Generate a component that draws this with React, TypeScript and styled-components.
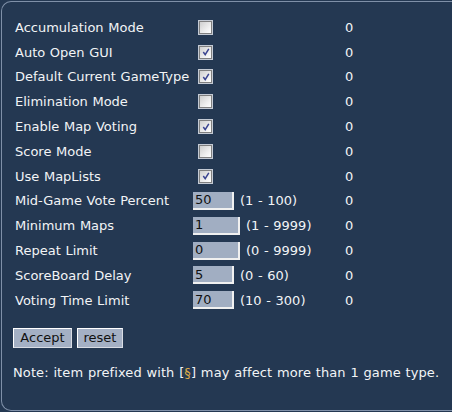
import React from "react";
import styled, { createGlobalStyle } from "styled-components";

const Global = createGlobalStyle`
  html, body { margin: 0; padding: 0; background: #243852; overflow: hidden; }
  body { font-family: "DejaVu Sans", Verdana, sans-serif; }
`;

const Page = styled.div`
  width: 452px;
  height: 412px;
  padding: 1px 0 1px 1px;
  box-sizing: border-box;
  overflow: hidden;
`;

const Panel = styled.div`
  width: 470px;
  height: 410px;
  box-sizing: border-box;
  border: 1px solid #7f90a8;
  border-right: none;
  border-radius: 10px 0 0 10px;
  background: #243852;
  padding: 13px 0 0 13px;
  color: #f2f4f6;
  font-size: 13px;
  word-spacing: 0.5px;
`;

const Grid = styled.div`
  display: grid;
  grid-template-columns: 178px 152px auto;
  grid-auto-rows: 24.8px;
  align-items: center;
`;

const Label = styled.div`
  white-space: nowrap;
`;

const Cell = styled.div`
  display: flex;
  align-items: center;
  gap: 6px;
`;

const Value = styled.div``;

const Box = styled.span<{ $checked?: boolean }>`
  display: inline-flex;
  align-items: center;
  justify-content: center;
  width: 11px;
  height: 11px;
  margin-left: 6px;
  border: 1px solid #808080;
  box-shadow: 0 0 0 1px #c4cad4;
  background: linear-gradient(135deg, #cfcfcf 0%, #f0f0f0 65%, #ffffff 100%);
`;

const Input = styled.span<{ $w: number }>`
  display: inline-flex;
  align-items: center;
  box-sizing: border-box;
  width: ${(p) => p.$w}px;
  height: 18px;
  padding-left: 2px;
  background: #a1aec2;
  color: #111;
  border-right: 2px solid #f0f0f0;
  border-bottom: 2px solid #f0f0f0;
  font-size: 13px;
`;

const Buttons = styled.div`
  display: flex;
  gap: 5px;
  margin-top: 15px;
  margin-left: -2px;
`;

const Button = styled.span<{ $w: number }>`
  display: inline-flex;
  align-items: center;
  justify-content: center;
  box-sizing: border-box;
  width: ${(p) => p.$w}px;
  height: 20px;
  background: #a4b0c4;
  color: #111;
  border-top: 1px solid #ffffff;
  border-left: 1px solid #ffffff;
  border-right: 1px solid #d8dce4;
  border-bottom: 1px solid #d8dce4;
  font-size: 13px;
`;

const Note = styled.div`
  margin-top: 17px;
  margin-left: -2px;
  white-space: nowrap;
  letter-spacing: 0.1px;
`;

const Mark = styled.span`
  color: #d8a848;
`;

const Check = () => (
  <svg width="8" height="8" viewBox="0 0 8 8">
    <path d="M1.3 4 L3.2 6.6 L6.8 0.8" stroke="#3a4490" strokeWidth="1.5" fill="none" />
  </svg>
);

type Row =
  | { label: string; kind: "check"; checked: boolean }
  | { label: string; kind: "num"; value: string; w: number; range: string };

const rows: Row[] = [
  { label: "Accumulation Mode", kind: "check", checked: false },
  { label: "Auto Open GUI", kind: "check", checked: true },
  { label: "Default Current GameType", kind: "check", checked: true },
  { label: "Elimination Mode", kind: "check", checked: false },
  { label: "Enable Map Voting", kind: "check", checked: true },
  { label: "Score Mode", kind: "check", checked: false },
  { label: "Use MapLists", kind: "check", checked: true },
  { label: "Mid-Game Vote Percent", kind: "num", value: "50", w: 41, range: "(1 - 100)" },
  { label: "Minimum Maps", kind: "num", value: "1", w: 47, range: "(1 - 9999)" },
  { label: "Repeat Limit", kind: "num", value: "0", w: 47, range: "(0 - 9999)" },
  { label: "ScoreBoard Delay", kind: "num", value: "5", w: 41, range: "(0 - 60)" },
  { label: "Voting Time Limit", kind: "num", value: "70", w: 41, range: "(10 - 300)" },
];

export default function App() {
  return (
    <Page>
      <Global />
      <Panel>
        <Grid>
          {rows.map((r) => (
            <React.Fragment key={r.label}>
              <Label>{r.label}</Label>
              <Cell>
                {r.kind === "check" ? (
                  <Box $checked={r.checked}>{r.checked && <Check />}</Box>
                ) : (
                  <>
                    <Input $w={r.w}>{r.value}</Input>
                    <span>{r.range}</span>
                  </>
                )}
              </Cell>
              <Value>0</Value>
            </React.Fragment>
          ))}
        </Grid>
        <Buttons>
          <Button $w={59}>Accept</Button>
          <Button $w={46}>reset</Button>
        </Buttons>
        <Note>
          Note: item prefixed with [<Mark>§</Mark>] may affect more than 1 game type.
        </Note>
      </Panel>
    </Page>
  );
}
